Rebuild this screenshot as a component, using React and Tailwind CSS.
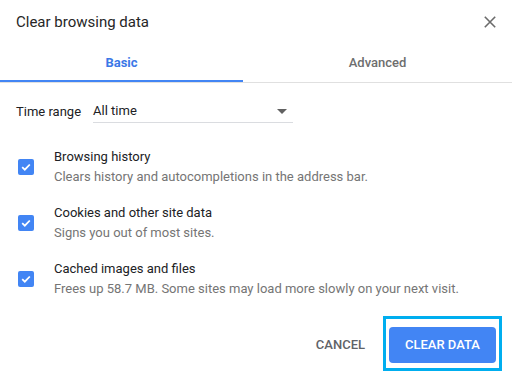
import { useState } from 'react';

const options = [
  { id: 'history', title: 'Browsing history', desc: 'Clears history and autocompletions in the address bar.' },
  { id: 'cookies', title: 'Cookies and other site data', desc: 'Signs you out of most sites.' },
  { id: 'cache', title: 'Cached images and files', desc: 'Frees up 58.7 MB. Some sites may load more slowly on your next visit.' },
];

function Checkbox({ checked, onChange }) {
  return (
    <button
      type="button"
      onClick={onChange}
      className={`w-4 h-4 rounded-[2px] grid place-items-center shrink-0 ${
        checked ? 'bg-[#4285f4]' : 'border-2 border-[#5f6368] bg-white'
      }`}
    >
      {checked && (
        <svg width="12" height="12" viewBox="0 0 12 12">
          <path d="M2.2 6.2 L4.8 8.7 L9.8 3.5" fill="none" stroke="#fff" strokeWidth="1.8" />
        </svg>
      )}
    </button>
  );
}

export default function App() {
  const [tab, setTab] = useState('basic');
  const [checked, setChecked] = useState({ history: true, cookies: true, cache: true });

  return (
    <div className="w-[512px] h-[379px] bg-white font-['Roboto',sans-serif] text-[#202124] overflow-hidden">
      {/* header */}
      <div className="h-[44px] flex items-center justify-between pl-4 pr-4">
        <h1 className="text-[15px] text-[#262626]">Clear browsing data</h1>
        <button className="w-3 h-3 grid place-items-center">
          <svg width="12" height="12" viewBox="0 0 12 12">
            <path d="M0.8 0.8 L11.2 11.2 M11.2 0.8 L0.8 11.2" stroke="#6b6b6b" strokeWidth="1.6" />
          </svg>
        </button>
      </div>

      {/* tabs */}
      <div className="flex">
        <button onClick={() => setTab('basic')} className="w-[243px] flex flex-col">
          <span
            className={`h-[36px] pt-[1px] flex items-center justify-center text-[13px] ${
              tab === 'basic' ? 'font-bold text-[#3b78e7]' : 'font-medium text-[#6e6e6e]'
            }`}
          >
            Basic
          </span>
          <span className={`h-[2px] ${tab === 'basic' ? 'bg-[#4285f4]' : ''}`} />
        </button>
        <button onClick={() => setTab('advanced')} className="flex-1 flex flex-col">
          <span
            className={`h-[36px] pt-[1px] flex items-center justify-center text-[13px] ${
              tab === 'advanced' ? 'font-bold text-[#3b78e7]' : 'font-medium text-[#6e6e6e]'
            }`}
          >
            Advanced
          </span>
          <span className={`h-[2px] ${tab === 'advanced' ? 'bg-[#4285f4]' : ''}`} />
        </button>
      </div>
      <div className="h-px bg-[#e0e0e0]" />

      {/* time range */}
      <div className="mt-[17px] pl-4 flex items-center gap-3">
        <span className="text-[13px]">Time range</span>
        <div className="w-[200px] h-[23px] border-b border-[#dadce0] flex items-center justify-between pr-[6px]">
          <span className="text-[13px]">All time</span>
          <svg width="10" height="5" viewBox="0 0 10 5">
            <path d="M0 0 L10 0 L5 5 Z" fill="#616161" />
          </svg>
        </div>
      </div>

      {/* options */}
      <div className="mt-[24px] flex flex-col gap-4">
        {options.map((o) => (
          <div key={o.id} className="flex items-center pl-[18px] gap-5">
            <Checkbox
              checked={checked[o.id]}
              onChange={() => setChecked((c) => ({ ...c, [o.id]: !c[o.id] }))}
            />
            <div className="text-[13px] leading-[20px]">
              <div>{o.title}</div>
              <div className="text-[#757575]">{o.desc}</div>
            </div>
          </div>
        ))}
      </div>

      {/* footer */}
      <div className="mt-[17px] flex justify-end items-center pr-[10px] gap-[2px]">
        <button className="px-4 h-9 mt-[3px] text-[13px] font-medium text-[#5f6368]">CANCEL</button>
        <div className="border-[3px] border-[#00aeef] px-[3px] pt-[8px] pb-[5px]">
          <button className="w-[107px] h-9 rounded bg-[#4285f4] text-white text-[13px] font-medium">
            CLEAR DATA
          </button>
        </div>
      </div>
    </div>
  );
}
